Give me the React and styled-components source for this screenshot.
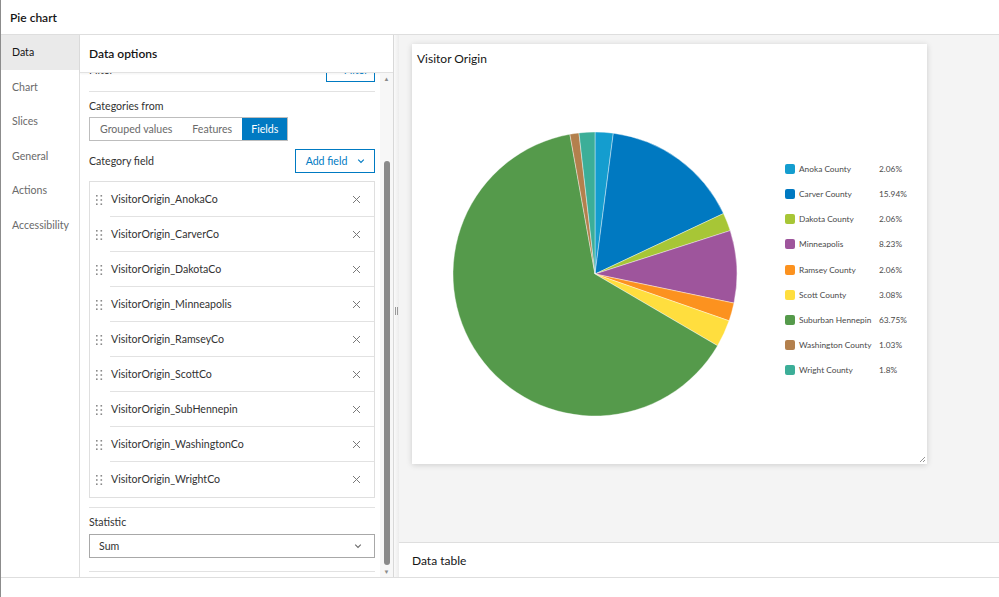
import styled, {createGlobalStyle} from 'styled-components'

const GlobalStyle = createGlobalStyle`
  html, body {
    margin: 0;
    padding: 0;
    background: #fff;
  }
  body {
    font-family: Lato, "Noto Sans", sans-serif;
    color: #323232;
  }
  * {
    box-sizing: border-box;
  }
`

const navItems = ['Data', 'Chart', 'Slices', 'General', 'Actions', 'Accessibility']

const fields = [
  'VisitorOrigin_AnokaCo',
  'VisitorOrigin_CarverCo',
  'VisitorOrigin_DakotaCo',
  'VisitorOrigin_Minneapolis',
  'VisitorOrigin_RamseyCo',
  'VisitorOrigin_ScottCo',
  'VisitorOrigin_SubHennepin',
  'VisitorOrigin_WashingtonCo',
  'VisitorOrigin_WrightCo',
]

const slices = [
  {label: 'Anoka County', value: 2.06, color: '#149dcf'},
  {label: 'Carver County', value: 15.94, color: '#0079c1'},
  {label: 'Dakota County', value: 2.06, color: '#a7c636'},
  {label: 'Minneapolis', value: 8.23, color: '#9e559c'},
  {label: 'Ramsey County', value: 2.06, color: '#fc921f'},
  {label: 'Scott County', value: 3.08, color: '#ffde3e'},
  {label: 'Suburban Hennepin', value: 63.75, color: '#559a4b'},
  {label: 'Washington County', value: 1.03, color: '#b3804d'},
  {label: 'Wright County', value: 1.8, color: '#3cae98'},
]

const Chevron = ({color = '#6a6a6a'}) => (
  <svg width="10" height="10" viewBox="0 0 10 10">
    <path d="M2.2 3.6 L5 6.4 L7.8 3.6" fill="none" stroke={color} strokeWidth="1.1" />
  </svg>
)

const CloseIcon = () => (
  <svg width="9" height="9" viewBox="0 0 9 9">
    <path d="M1 1 L8 8 M8 1 L1 8" stroke="#7a7a7a" strokeWidth="1" />
  </svg>
)

const Handle = () => (
  <svg width="8" height="12" viewBox="0 0 8 12">
    {[0, 1, 2].map(r =>
      [0, 1].map(c => (
        <rect key={`${r}-${c}`} x={1 + c * 4.5} y={1 + r * 4.2} width="1.6" height="1.6" fill="#8a8a8a" />
      )),
    )}
  </svg>
)

const Pie = () => {
  const cx = 144
  const cy = 144
  const r = 142
  const total = slices.reduce((s, x) => s + x.value, 0)
  let acc = 0
  return (
    <svg width="288" height="288" viewBox="0 0 288 288">
      {slices.map(s => {
        const a0 = (acc / total) * Math.PI * 2 - Math.PI / 2
        acc += s.value
        const a1 = (acc / total) * Math.PI * 2 - Math.PI / 2
        const large = a1 - a0 > Math.PI ? 1 : 0
        const x0 = cx + r * Math.cos(a0)
        const y0 = cy + r * Math.sin(a0)
        const x1 = cx + r * Math.cos(a1)
        const y1 = cy + r * Math.sin(a1)
        return (
          <path
            key={s.label}
            d={`M${cx} ${cy} L${x0} ${y0} A${r} ${r} 0 ${large} 1 ${x1} ${y1} Z`}
            fill={s.color}
            stroke="#fff"
            strokeWidth="0.4"
          />
        )
      })}
    </svg>
  )
}

const App = () => {
  return (
    <Page>
      <GlobalStyle />
      <TopBar>Pie chart</TopBar>
      <Body>
        <Nav>
          {navItems.map((item, i) => (
            <NavItem key={item} active={i === 0}>
              {item}
            </NavItem>
          ))}
        </Nav>
        <Panel>
          <PanelHeader>Data options</PanelHeader>
          <PanelMain>
            <Scroller>
              <Content>
                <Section top="12px">
                  <Row>
                    <Label>Filter</Label>
                    <OutlineButton>+ Filter</OutlineButton>
                  </Row>
                </Section>
                <Section top="7px">
                  <Label>Categories from</Label>
                  <Segmented>
                    <Segment>Grouped values</Segment>
                    <Segment>Features</Segment>
                    <Segment selected>Fields</Segment>
                  </Segmented>
                  <Row>
                    <Label>Category field</Label>
                    <OutlineButton wide>
                      Add field <Chevron color="#007ac2" />
                    </OutlineButton>
                  </Row>
                  <FieldList>
                    {fields.map(f => (
                      <FieldRow key={f}>
                        <Handle />
                        <FieldName>{f}</FieldName>
                        <CloseIcon />
                      </FieldRow>
                    ))}
                  </FieldList>
                </Section>
                <Section top="7px" bottom="13px">
                  <Label>Statistic</Label>
                  <Select>
                    <span>Sum</span>
                    <Chevron />
                  </Select>
                </Section>
              </Content>
            </Scroller>
            <Track>
              <Arrow>▲</Arrow>
              <ThumbSpace>
                <Thumb />
              </ThumbSpace>
              <Arrow>▼</Arrow>
            </Track>
          </PanelMain>
        </Panel>
        <Splitter>
          <Grip />
        </Splitter>
        <Right>
          <Canvas>
            <Card>
              <CardTitle>Visitor Origin</CardTitle>
              <CardBody>
                <Pie />
                <Legend>
                  {slices.map(s => (
                    <LegendRow key={s.label}>
                      <Swatch color={s.color} />
                      <span>{s.label}</span>
                      <span>{s.value}%</span>
                    </LegendRow>
                  ))}
                </Legend>
              </CardBody>
              <Resize viewBox="0 0 8 8" width="8" height="8">
                <path d="M7 2 L2 7 M7 5 L5 7" stroke="#8a8a8a" strokeWidth="0.9" />
              </Resize>
            </Card>
          </Canvas>
          <TableBar>Data table</TableBar>
        </Right>
      </Body>
      <Footer />
    </Page>
  )
}

export default App

const Page = styled.div`
  width: 999px;
  height: 597px;
  display: flex;
  flex-direction: column;
  border-left: 1px solid #8c8c8c;
  overflow: hidden;
`

const TopBar = styled.div`
  height: 35px;
  flex-shrink: 0;
  display: flex;
  align-items: center;
  padding-left: 9px;
  font-size: 12px;
  font-weight: 600;
  color: #151515;
  border-bottom: 1px solid #dedede;
`

const Body = styled.div`
  height: 542px;
  display: flex;
`

const Nav = styled.div`
  width: 79px;
  flex-shrink: 0;
  border-right: 1px solid #dedede;
  display: flex;
  flex-direction: column;
`

const NavItem = styled.div`
  height: 34.5px;
  display: flex;
  align-items: center;
  padding-left: 11px;
  font-size: 10.6px;
  color: ${p => (p.active ? '#151515' : '#6a6a6a')};
  background: ${p => (p.active ? '#eaeaea' : 'transparent')};
`

const Panel = styled.div`
  width: 313px;
  flex-shrink: 0;
  display: flex;
  flex-direction: column;
`

const PanelHeader = styled.div`
  height: 38px;
  flex-shrink: 0;
  display: flex;
  align-items: center;
  padding-left: 9px;
  font-size: 12px;
  font-weight: 600;
  color: #151515;
  border-bottom: 1px solid #e2e2e2;
  box-shadow: 0 1px 2px rgba(0, 0, 0, 0.05);
`

const PanelMain = styled.div`
  flex: 1;
  display: flex;
  min-height: 0;
`

const Scroller = styled.div`
  flex: 1;
  overflow: hidden;
`

const Content = styled.div`
  margin-top: -27px;
  padding: 0 5px 0 9px;
`

const Section = styled.div`
  padding: ${p => p.top} 0 ${p => p.bottom || '9px'};
  border-bottom: 1px solid #e2e2e2;
  display: flex;
  flex-direction: column;
  gap: 8px;
`

const Row = styled.div`
  display: flex;
  align-items: center;
  justify-content: space-between;
`

const Label = styled.div`
  font-size: 10.6px;
  color: #323232;
  line-height: 14px;
`

const OutlineButton = styled.div`
  height: 24px;
  width: ${p => (p.wide ? '80px' : '49px')};
  border: 1px solid #007ac2;
  color: #007ac2;
  font-size: 10.6px;
  display: flex;
  align-items: center;
  justify-content: center;
  gap: 9px;
  padding-left: 2px;
`

const Segmented = styled.div`
  display: flex;
  align-self: flex-start;
  height: 24px;
  border: 1px solid #bdbdbd;
  margin-top: -4px;
`

const Segment = styled.div`
  display: flex;
  align-items: center;
  padding: 0 ${p => (p.selected ? '9px' : '10px')};
  font-size: 10.6px;
  color: ${p => (p.selected ? '#fff' : '#6a6a6a')};
  background: ${p => (p.selected ? '#007ac2' : 'transparent')};
`

const FieldList = styled.div`
  border: 1px solid #dfdfdf;
  display: flex;
  flex-direction: column;
`

const FieldRow = styled.div`
  height: 35px;
  display: flex;
  align-items: center;
  padding: 0 13px 0 5px;
  gap: 8px;
  position: relative;
  &:not(:last-child)::after {
    content: '';
    position: absolute;
    left: 20px;
    right: 0;
    bottom: 0;
    border-bottom: 1px solid #e2e2e2;
  }
`

const FieldName = styled.div`
  flex: 1;
  font-size: 10.6px;
  color: #323232;
  padding-bottom: 2px;
`

const Select = styled.div`
  height: 24px;
  border: 1px solid #a8a8a8;
  display: flex;
  align-items: center;
  justify-content: space-between;
  padding: 0 11px 0 9px;
  font-size: 10.6px;
  color: #323232;
  margin-top: -3px;
`

const Track = styled.div`
  width: 13px;
  flex-shrink: 0;
  display: flex;
  flex-direction: column;
  align-items: center;
  background: #f7f7f7;
`

const Arrow = styled.div`
  font-size: 6px;
  color: #8a8a8a;
  height: 11px;
  display: flex;
  align-items: center;
  justify-content: center;
`

const ThumbSpace = styled.div`
  flex: 1;
  display: flex;
  flex-direction: column;
  justify-content: flex-end;
  padding-bottom: 1px;
`

const Thumb = styled.div`
  width: 6px;
  height: 404px;
  border-radius: 3px;
  background: #8a8a8a;
`

const Splitter = styled.div`
  width: 6px;
  flex-shrink: 0;
  border-left: 1px solid #d8d8d8;
  background: linear-gradient(to right, #fafafa, #ececec);
  display: flex;
  align-items: center;
  justify-content: center;
`

const Grip = styled.div`
  width: 3px;
  height: 8px;
  border-left: 1px solid #9a9a9a;
  border-right: 1px solid #9a9a9a;
  margin-top: 10px;
`

const Right = styled.div`
  flex: 1;
  display: flex;
  flex-direction: column;
  background: #f4f4f4;
`

const Canvas = styled.div`
  flex: 1;
  padding: 9px 0 0 13px;
`

const Card = styled.div`
  width: 515px;
  height: 420px;
  background: #fff;
  box-shadow: 0 1px 6px rgba(0, 0, 0, 0.16);
  display: flex;
  flex-direction: column;
  position: relative;
`

const CardTitle = styled.div`
  padding: 7px 5px 0;
  font-size: 12px;
  color: #151515;
`

const CardBody = styled.div`
  flex: 1;
  display: flex;
  align-items: center;
  padding: 18px 0 0 39px;
  gap: 46px;
`

const Legend = styled.div`
  display: flex;
  flex-direction: column;
  margin-bottom: 9px;
`

const LegendRow = styled.div`
  height: 25.1px;
  display: grid;
  grid-template-columns: 10px 76px auto;
  column-gap: 4px;
  align-items: center;
  font-size: 8.3px;
  color: #4a4a4a;
`

const Swatch = styled.div`
  width: 10px;
  height: 10px;
  border-radius: 2px;
  background: ${p => p.color};
`

const Resize = styled.svg`
  position: absolute;
  right: 1px;
  bottom: 1px;
`

const TableBar = styled.div`
  height: 35px;
  flex-shrink: 0;
  background: #fff;
  border-top: 1px solid #dedede;
  display: flex;
  align-items: center;
  padding: 0 0 0 13px;
  font-size: 12px;
  color: #151515;
`

const Footer = styled.div`
  height: 20px;
  flex-shrink: 0;
  border-top: 1px solid #dedede;
  background: #fff;
`
